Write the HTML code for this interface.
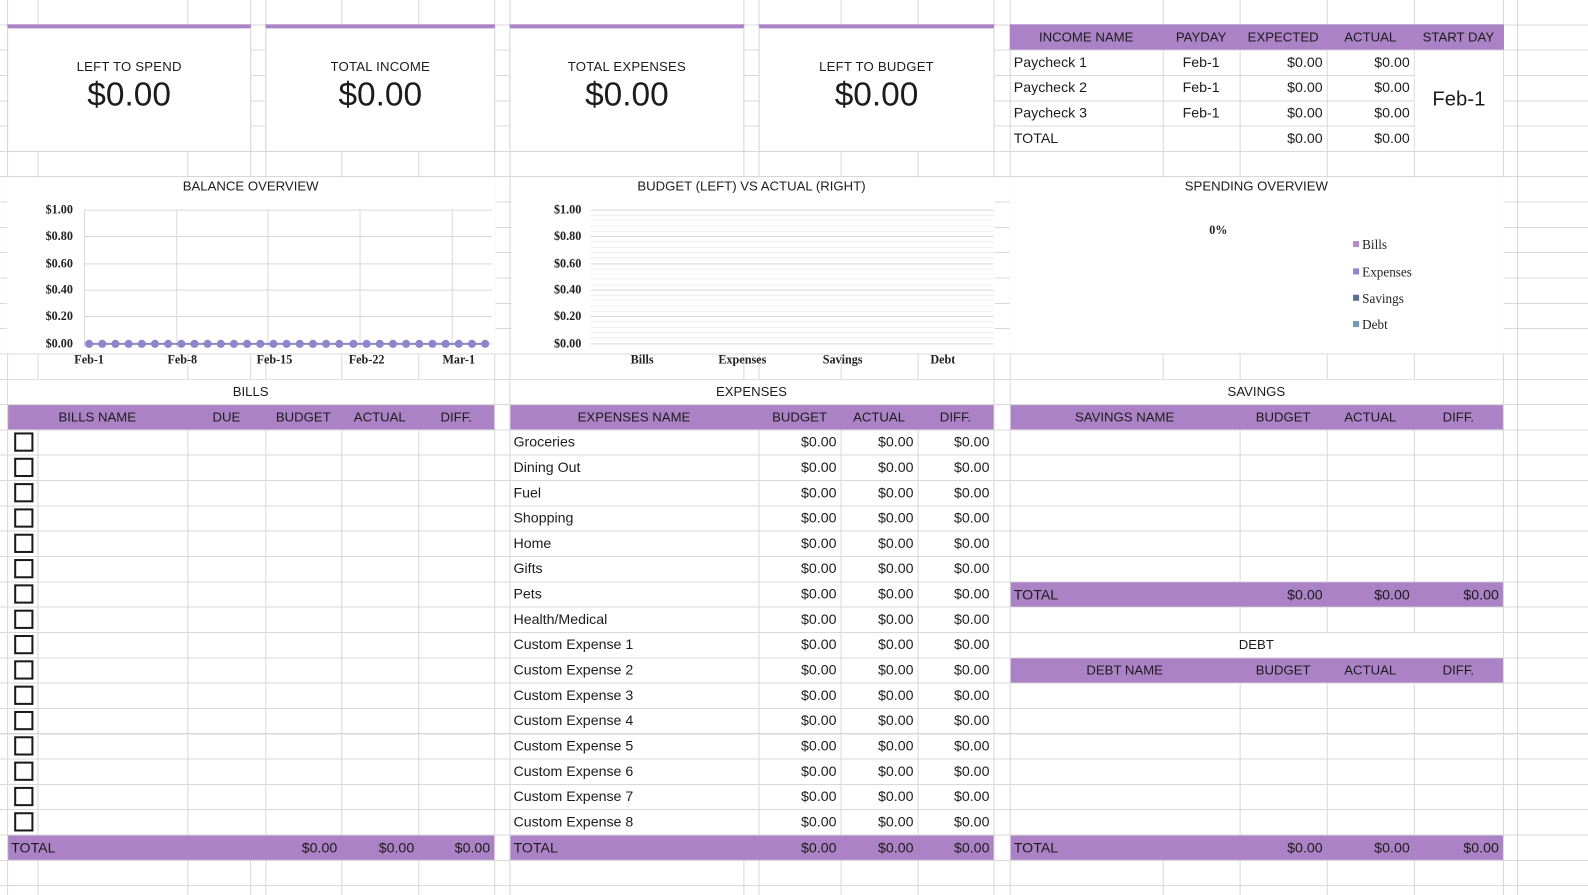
<!DOCTYPE html>
<html><head><meta charset="utf-8">
<style>
*{margin:0;padding:0;box-sizing:border-box}
body{width:1588px;height:895px;overflow:hidden;position:relative;background:#fff;font-family:"Liberation Sans",sans-serif;color:#1c1c1c}
#s{position:absolute;left:0;top:0;width:1568px;height:884px;transform:scale(1.01276);transform-origin:0 0;
background-image:repeating-linear-gradient(to bottom,transparent 0 24px,#d8d8d8 24px 25px)}
.v{position:absolute;top:0;width:1px;height:884px;background:#d8d8d8}
.vs{position:absolute;width:1px;background:#d8d8d8}
.w{position:absolute;background:#fff}
.p{position:absolute;background:#ab82c5}
.card{position:absolute;top:24px;height:126px;background:#fff;border:1px solid #d4d4d4;border-top:4px solid #ab82c5;text-align:center}
.card .l{font-size:13px;margin-top:30px;letter-spacing:.2px}
.card .n{font-size:33px;margin-top:1px}
.r{position:absolute;height:25px;display:flex;font-size:14px;line-height:25px}
.r>div{flex:none;white-space:nowrap;overflow:hidden}
.L{text-align:left;padding-left:4px}.R{text-align:right;padding-right:4px}.C{text-align:center}
.h{font-size:13px}
.t{position:absolute;height:25px;line-height:25px;font-size:13px;text-align:center}
.cb{position:absolute;left:14px;width:19px;height:19px;border:2px solid #1a1a1a;background:#fff}
</style></head><body><div id="s">
<div class="v" style="left:7px"></div><div class="v" style="left:37px"></div><div class="v" style="left:185px"></div>
<div class="vs" style="left:247px;top:0;height:375px"></div><div class="vs" style="left:247px;top:849px;height:35px"></div>
<div class="v" style="left:262px"></div><div class="v" style="left:337px"></div>
<div class="v" style="left:413px"></div><div class="v" style="left:488px"></div><div class="v" style="left:503px"></div>
<div class="vs" style="left:734px;top:0;height:375px"></div><div class="vs" style="left:734px;top:849px;height:35px"></div>
<div class="v" style="left:749px"></div><div class="v" style="left:830px"></div>
<div class="v" style="left:906px"></div><div class="v" style="left:981px"></div><div class="v" style="left:997px"></div>
<div class="vs" style="left:1148px;top:0;height:375px"></div><div class="vs" style="left:1148px;top:849px;height:35px"></div>
<div class="v" style="left:1224px"></div><div class="v" style="left:1310px"></div>
<div class="v" style="left:1396px"></div><div class="v" style="left:1484px"></div><div class="v" style="left:1498px"></div>
<div class="v" style="left:1568px"></div>

<div class="w" style="left:1397px;top:50px;width:87px;height:99px"></div>
<div class="w" style="left:8px;top:375px;width:480px;height:24px"></div>
<div class="w" style="left:504px;top:375px;width:477px;height:24px"></div>
<div class="w" style="left:998px;top:375px;width:486px;height:24px"></div>
<div class="w" style="left:998px;top:625px;width:486px;height:24px"></div>
<div class="w" style="left:7px;top:175px;width:482px;height:174px"></div>
<div class="w" style="left:505px;top:175px;width:477px;height:174px"></div>
<div class="w" style="left:997px;top:175px;width:488px;height:174px"></div>

<div class="card" style="left:7px;width:241px"><div class="l">LEFT TO SPEND</div><div class="n">$0.00</div></div>
<div class="card" style="left:262px;width:227px"><div class="l">TOTAL INCOME</div><div class="n">$0.00</div></div>
<div class="card" style="left:503px;width:232px"><div class="l">TOTAL EXPENSES</div><div class="n">$0.00</div></div>
<div class="card" style="left:749px;width:233px"><div class="l">LEFT TO BUDGET</div><div class="n">$0.00</div></div>

<div class="p" style="left:997px;top:24px;width:488px;height:25px"></div>
<div class="r h" style="left:997px;top:24px"><div class="C" style="width:151px">INCOME NAME</div><div class="C" style="width:76px">PAYDAY</div><div class="C" style="width:86px">EXPECTED</div><div class="C" style="width:86px">ACTUAL</div><div class="C" style="width:88px">START DAY</div></div>
<div class="r" style="left:997px;top:49px"><div class="L" style="width:151px">Paycheck 1</div><div class="C" style="width:76px">Feb-1</div><div class="R" style="width:86px">$0.00</div><div class="R" style="width:86px">$0.00</div></div>
<div class="r" style="left:997px;top:74px"><div class="L" style="width:151px">Paycheck 2</div><div class="C" style="width:76px">Feb-1</div><div class="R" style="width:86px">$0.00</div><div class="R" style="width:86px">$0.00</div></div>
<div class="r" style="left:997px;top:99px"><div class="L" style="width:151px">Paycheck 3</div><div class="C" style="width:76px">Feb-1</div><div class="R" style="width:86px">$0.00</div><div class="R" style="width:86px">$0.00</div></div>
<div class="r" style="left:997px;top:124px"><div class="L" style="width:151px">TOTAL</div><div class="C" style="width:76px"></div><div class="R" style="width:86px">$0.00</div><div class="R" style="width:86px">$0.00</div></div>
<div class="t" style="left:1397px;top:86px;width:87px;font-size:20px">Feb-1</div>

<div class="t" style="left:7px;top:171px;width:481px">BALANCE OVERVIEW</div>
<div class="t" style="left:503px;top:171px;width:478px">BUDGET (LEFT) VS ACTUAL (RIGHT)</div>
<div class="t" style="left:997px;top:171px;width:487px">SPENDING OVERVIEW</div>

<svg style="position:absolute;left:0;top:0" width="1568" height="884" font-family="Liberation Serif,serif" font-weight="bold" font-size="12" fill="#222">
<g stroke="#d9d9d9" stroke-width="1">
<line x1="83" y1="207.5" x2="486" y2="207.5"/><line x1="83" y1="233.5" x2="486" y2="233.5"/><line x1="83" y1="260.5" x2="486" y2="260.5"/><line x1="83" y1="286.5" x2="486" y2="286.5"/><line x1="83" y1="312.5" x2="486" y2="312.5"/><line x1="83" y1="339.5" x2="486" y2="339.5"/>
<line x1="83.5" y1="207" x2="83.5" y2="343"/><line x1="174.5" y1="207" x2="174.5" y2="343"/><line x1="264.5" y1="207" x2="264.5" y2="343"/><line x1="355.5" y1="207" x2="355.5" y2="343"/><line x1="446.5" y1="207" x2="446.5" y2="343"/>
</g>
<g stroke="#efefef">
<line x1="583" y1="212.5" x2="981" y2="212.5"/><line x1="583" y1="217.5" x2="981" y2="217.5"/><line x1="583" y1="223.5" x2="981" y2="223.5"/><line x1="583" y1="228.5" x2="981" y2="228.5"/>
<line x1="583" y1="238.5" x2="981" y2="238.5"/><line x1="583" y1="244.5" x2="981" y2="244.5"/><line x1="583" y1="249.5" x2="981" y2="249.5"/><line x1="583" y1="254.5" x2="981" y2="254.5"/>
<line x1="583" y1="265.5" x2="981" y2="265.5"/><line x1="583" y1="270.5" x2="981" y2="270.5"/><line x1="583" y1="275.5" x2="981" y2="275.5"/><line x1="583" y1="281.5" x2="981" y2="281.5"/>
<line x1="583" y1="291.5" x2="981" y2="291.5"/><line x1="583" y1="296.5" x2="981" y2="296.5"/><line x1="583" y1="302.5" x2="981" y2="302.5"/><line x1="583" y1="307.5" x2="981" y2="307.5"/>
<line x1="583" y1="317.5" x2="981" y2="317.5"/><line x1="583" y1="323.5" x2="981" y2="323.5"/><line x1="583" y1="328.5" x2="981" y2="328.5"/><line x1="583" y1="333.5" x2="981" y2="333.5"/>
</g>
<g stroke="#d6d6d6">
<line x1="583" y1="207.5" x2="981" y2="207.5"/><line x1="583" y1="233.5" x2="981" y2="233.5"/><line x1="583" y1="260.5" x2="981" y2="260.5"/><line x1="583" y1="286.5" x2="981" y2="286.5"/><line x1="583" y1="312.5" x2="981" y2="312.5"/><line x1="583" y1="339.5" x2="981" y2="339.5"/>
</g>
<g text-anchor="end">
<text x="72" y="211">$1.00</text><text x="72" y="237">$0.80</text><text x="72" y="264">$0.60</text><text x="72" y="290">$0.40</text><text x="72" y="316">$0.20</text><text x="72" y="343">$0.00</text>
<text x="574" y="211">$1.00</text><text x="574" y="237">$0.80</text><text x="574" y="264">$0.60</text><text x="574" y="290">$0.40</text><text x="574" y="316">$0.20</text><text x="574" y="343">$0.00</text>
</g>
<g text-anchor="middle">
<text x="88" y="359">Feb-1</text><text x="180" y="359">Feb-8</text><text x="271" y="359">Feb-15</text><text x="362" y="359">Feb-22</text><text x="453" y="359">Mar-1</text>
<text x="634" y="359">Bills</text><text x="733" y="359">Expenses</text><text x="832" y="359">Savings</text><text x="931" y="359">Debt</text>
<text x="1203" y="231">0%</text>
</g>
<line x1="88" y1="339.5" x2="479" y2="339.5" stroke="#8b87c9" stroke-width="2"/>
<g fill="#8b87c9">
<circle cx="88" cy="339.5" r="4"/><circle cx="101" cy="339.5" r="4"/><circle cx="114" cy="339.5" r="4"/><circle cx="127" cy="339.5" r="4"/><circle cx="140" cy="339.5" r="4"/><circle cx="153" cy="339.5" r="4"/><circle cx="166" cy="339.5" r="4"/><circle cx="179" cy="339.5" r="4"/><circle cx="192" cy="339.5" r="4"/><circle cx="205" cy="339.5" r="4"/><circle cx="218" cy="339.5" r="4"/><circle cx="231" cy="339.5" r="4"/><circle cx="244" cy="339.5" r="4"/><circle cx="257" cy="339.5" r="4"/><circle cx="270" cy="339.5" r="4"/><circle cx="283" cy="339.5" r="4"/><circle cx="296" cy="339.5" r="4"/><circle cx="309" cy="339.5" r="4"/><circle cx="322" cy="339.5" r="4"/><circle cx="335" cy="339.5" r="4"/><circle cx="349" cy="339.5" r="4"/><circle cx="362" cy="339.5" r="4"/><circle cx="375" cy="339.5" r="4"/><circle cx="388" cy="339.5" r="4"/><circle cx="401" cy="339.5" r="4"/><circle cx="414" cy="339.5" r="4"/><circle cx="427" cy="339.5" r="4"/><circle cx="440" cy="339.5" r="4"/><circle cx="453" cy="339.5" r="4"/><circle cx="466" cy="339.5" r="4"/><circle cx="479" cy="339.5" r="4"/>
</g>
<g font-weight="normal" font-size="13">
<rect x="1336" y="238" width="6" height="6" fill="#b88ad0"/><text x="1345" y="246">Bills</text>
<rect x="1336" y="265" width="6" height="6" fill="#8a87cf"/><text x="1345" y="273">Expenses</text>
<rect x="1336" y="291" width="6" height="6" fill="#5a6f96"/><text x="1345" y="299">Savings</text>
<rect x="1336" y="317" width="6" height="6" fill="#6f9bb8"/><text x="1345" y="325">Debt</text>
</g>
</svg>

<div class="t" style="left:7px;top:374px;width:481px">BILLS</div>
<div class="t" style="left:503px;top:374px;width:478px">EXPENSES</div>
<div class="t" style="left:997px;top:374px;width:487px">SAVINGS</div>
<div class="t" style="left:997px;top:624px;width:487px">DEBT</div>

<div class="p" style="left:8px;top:400px;width:480px;height:24px"></div>
<div class="r h" style="left:7px;top:399px"><div class="C" style="width:178px">BILLS NAME</div><div class="C" style="width:77px">DUE</div><div class="C" style="width:75px">BUDGET</div><div class="C" style="width:76px">ACTUAL</div><div class="C" style="width:75px">DIFF.</div></div>
<div class="cb" style="top:427px"></div><div class="cb" style="top:452px"></div><div class="cb" style="top:477px"></div><div class="cb" style="top:502px"></div>
<div class="cb" style="top:527px"></div><div class="cb" style="top:552px"></div><div class="cb" style="top:577px"></div><div class="cb" style="top:602px"></div>
<div class="cb" style="top:627px"></div><div class="cb" style="top:652px"></div><div class="cb" style="top:677px"></div><div class="cb" style="top:702px"></div>
<div class="cb" style="top:727px"></div><div class="cb" style="top:752px"></div><div class="cb" style="top:777px"></div><div class="cb" style="top:802px"></div>
<div class="p" style="left:8px;top:825px;width:480px;height:24px"></div>
<div class="r" style="left:7px;top:825px"><div class="L" style="width:255px">TOTAL</div><div class="R" style="width:75px">$0.00</div><div class="R" style="width:76px">$0.00</div><div class="R" style="width:75px">$0.00</div></div>

<div class="p" style="left:504px;top:400px;width:477px;height:24px"></div>
<div class="r h" style="left:503px;top:399px"><div class="C" style="width:246px">EXPENSES NAME</div><div class="C" style="width:81px">BUDGET</div><div class="C" style="width:76px">ACTUAL</div><div class="C" style="width:75px">DIFF.</div></div>
<div class="r" style="left:503px;top:424px"><div class="L" style="width:246px">Groceries</div><div class="R" style="width:81px">$0.00</div><div class="R" style="width:76px">$0.00</div><div class="R" style="width:75px">$0.00</div></div>
<div class="r" style="left:503px;top:449px"><div class="L" style="width:246px">Dining Out</div><div class="R" style="width:81px">$0.00</div><div class="R" style="width:76px">$0.00</div><div class="R" style="width:75px">$0.00</div></div>
<div class="r" style="left:503px;top:474px"><div class="L" style="width:246px">Fuel</div><div class="R" style="width:81px">$0.00</div><div class="R" style="width:76px">$0.00</div><div class="R" style="width:75px">$0.00</div></div>
<div class="r" style="left:503px;top:499px"><div class="L" style="width:246px">Shopping</div><div class="R" style="width:81px">$0.00</div><div class="R" style="width:76px">$0.00</div><div class="R" style="width:75px">$0.00</div></div>
<div class="r" style="left:503px;top:524px"><div class="L" style="width:246px">Home</div><div class="R" style="width:81px">$0.00</div><div class="R" style="width:76px">$0.00</div><div class="R" style="width:75px">$0.00</div></div>
<div class="r" style="left:503px;top:549px"><div class="L" style="width:246px">Gifts</div><div class="R" style="width:81px">$0.00</div><div class="R" style="width:76px">$0.00</div><div class="R" style="width:75px">$0.00</div></div>
<div class="r" style="left:503px;top:574px"><div class="L" style="width:246px">Pets</div><div class="R" style="width:81px">$0.00</div><div class="R" style="width:76px">$0.00</div><div class="R" style="width:75px">$0.00</div></div>
<div class="r" style="left:503px;top:599px"><div class="L" style="width:246px">Health/Medical</div><div class="R" style="width:81px">$0.00</div><div class="R" style="width:76px">$0.00</div><div class="R" style="width:75px">$0.00</div></div>
<div class="r" style="left:503px;top:624px"><div class="L" style="width:246px">Custom Expense 1</div><div class="R" style="width:81px">$0.00</div><div class="R" style="width:76px">$0.00</div><div class="R" style="width:75px">$0.00</div></div>
<div class="r" style="left:503px;top:649px"><div class="L" style="width:246px">Custom Expense 2</div><div class="R" style="width:81px">$0.00</div><div class="R" style="width:76px">$0.00</div><div class="R" style="width:75px">$0.00</div></div>
<div class="r" style="left:503px;top:674px"><div class="L" style="width:246px">Custom Expense 3</div><div class="R" style="width:81px">$0.00</div><div class="R" style="width:76px">$0.00</div><div class="R" style="width:75px">$0.00</div></div>
<div class="r" style="left:503px;top:699px"><div class="L" style="width:246px">Custom Expense 4</div><div class="R" style="width:81px">$0.00</div><div class="R" style="width:76px">$0.00</div><div class="R" style="width:75px">$0.00</div></div>
<div class="r" style="left:503px;top:724px"><div class="L" style="width:246px">Custom Expense 5</div><div class="R" style="width:81px">$0.00</div><div class="R" style="width:76px">$0.00</div><div class="R" style="width:75px">$0.00</div></div>
<div class="r" style="left:503px;top:749px"><div class="L" style="width:246px">Custom Expense 6</div><div class="R" style="width:81px">$0.00</div><div class="R" style="width:76px">$0.00</div><div class="R" style="width:75px">$0.00</div></div>
<div class="r" style="left:503px;top:774px"><div class="L" style="width:246px">Custom Expense 7</div><div class="R" style="width:81px">$0.00</div><div class="R" style="width:76px">$0.00</div><div class="R" style="width:75px">$0.00</div></div>
<div class="r" style="left:503px;top:799px"><div class="L" style="width:246px">Custom Expense 8</div><div class="R" style="width:81px">$0.00</div><div class="R" style="width:76px">$0.00</div><div class="R" style="width:75px">$0.00</div></div>
<div class="p" style="left:504px;top:825px;width:477px;height:24px"></div>
<div class="r" style="left:503px;top:825px"><div class="L" style="width:246px">TOTAL</div><div class="R" style="width:81px">$0.00</div><div class="R" style="width:76px">$0.00</div><div class="R" style="width:75px">$0.00</div></div>

<div class="p" style="left:998px;top:400px;width:486px;height:24px"></div>
<div class="r h" style="left:997px;top:399px"><div class="C" style="width:227px">SAVINGS NAME</div><div class="C" style="width:86px">BUDGET</div><div class="C" style="width:86px">ACTUAL</div><div class="C" style="width:88px">DIFF.</div></div>
<div class="p" style="left:998px;top:575px;width:486px;height:24px"></div>
<div class="r" style="left:997px;top:575px"><div class="L" style="width:227px">TOTAL</div><div class="R" style="width:86px">$0.00</div><div class="R" style="width:86px">$0.00</div><div class="R" style="width:88px">$0.00</div></div>

<div class="p" style="left:998px;top:650px;width:486px;height:24px"></div>
<div class="r h" style="left:997px;top:649px"><div class="C" style="width:227px">DEBT NAME</div><div class="C" style="width:86px">BUDGET</div><div class="C" style="width:86px">ACTUAL</div><div class="C" style="width:88px">DIFF.</div></div>
<div class="p" style="left:998px;top:825px;width:486px;height:24px"></div>
<div class="r" style="left:997px;top:825px"><div class="L" style="width:227px">TOTAL</div><div class="R" style="width:86px">$0.00</div><div class="R" style="width:86px">$0.00</div><div class="R" style="width:88px">$0.00</div></div>
</div></body></html>
